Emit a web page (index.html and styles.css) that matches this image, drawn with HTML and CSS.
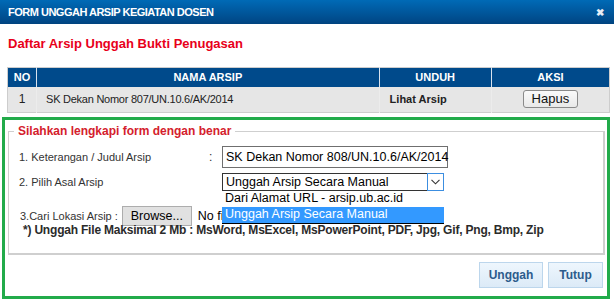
FILE: index.html
```html
<!DOCTYPE html>
<html>
<head>
<meta charset="utf-8">
<link rel="stylesheet" href="styles.css">
</head>
<body>
<div class="dialog">
  <div class="titlebar">
    <span class="title">FORM UNGGAH ARSIP KEGIATAN DOSEN</span>
    <span class="close">✖</span>
  </div>
  <h2 class="heading">Daftar Arsip Unggah Bukti Penugasan</h2>
  <table class="arsip">
    <colgroup><col class="w-no"><col class="w-nama"><col class="w-unduh"><col class="w-aksi"></colgroup>
    <thead>
      <tr><th>NO</th><th>NAMA ARSIP</th><th>UNDUH</th><th>AKSI</th></tr>
    </thead>
    <tbody>
      <tr>
        <td class="c-no">1</td>
        <td class="c-nama">SK Dekan Nomor 807/UN.10.6/AK/2014</td>
        <td class="c-unduh">Lihat Arsip</td>
        <td class="c-aksi"><span class="btn-hapus">Hapus</span></td>
      </tr>
    </tbody>
  </table>
  <div class="panel">
    <fieldset class="form">
      <legend>Silahkan lengkapi form dengan benar</legend>
      <div class="row r1">
        <span class="lbl">1. Keterangan / Judul Arsip</span>
        <span class="colon">:</span>
        <div class="input">SK Dekan Nomor 808/UN.10.6/AK/2014</div>
      </div>
      <div class="row r2">
        <span class="lbl">2. Pilih Asal Arsip</span>
        <span class="colon"></span>
        <div class="select-wrap">
          <div class="select">
            <span class="sel-text">Unggah Arsip Secara Manual</span>
            <span class="arrow"><svg width="9" height="6" viewBox="0 0 9 6"><path d="M0.5 0.8 L4.5 4.8 L8.5 0.8" fill="none" stroke="#333" stroke-width="1.1"/></svg></span>
          </div>
          <div class="options">
            <div class="opt">Dari Alamat URL - arsip.ub.ac.id</div>
            <div class="opt sel">Unggah Arsip Secara Manual</div>
          </div>
        </div>
      </div>
      <div class="row r3">
        <span class="lbl3">3.Cari Lokasi Arsip :</span>
        <span class="browse">Browse...</span>
        <span class="nofile">No file selected.</span>
      </div>
      <div class="note">*) Unggah File Maksimal 2 Mb : MsWord, MsExcel, MsPowerPoint, PDF, Jpg, Gif, Png, Bmp, Zip</div>
    </fieldset>
    <div class="actions">
      <span class="btn">Unggah</span>
      <span class="btn">Tutup</span>
    </div>
  </div>
</div>
</body>
</html>
```

FILE: styles.css
```css
* { box-sizing: border-box; }
html, body { margin: 0; padding: 0; background: #fff; }
body { font-family: "Liberation Sans", Arial, sans-serif; width: 614px; height: 303px; overflow: hidden; }

.dialog { width: 614px; }

.titlebar {
  height: 24px;
  background: linear-gradient(#006ab6, #004a8a 85%, #00437e);
  display: flex;
  align-items: center;
  justify-content: space-between;
  padding: 0 10px 0 8px;
}
.title { color: #fff; font-weight: bold; font-size: 11px; letter-spacing: -0.5px; }
.close { color: #e8eef6; font-size: 10px; font-weight: bold; }

.heading {
  margin: 12px 0 0 8px;
  height: 20px;
  font-size: 13px;
  font-weight: bold;
  color: #e8001a;
  line-height: 16px;
}

.arsip {
  margin: 11px 0 0 7px;
  width: 603px;
  border-collapse: collapse;
  table-layout: fixed;
  border: 1px solid #cdcdcd;
  font-size: 11px;
}
.w-no { width: 29px; }
.w-nama { width: 342px; }
.w-unduh { width: 112px; }
.w-aksi { width: 118px; }
.arsip th {
  background: #004a8b;
  color: #fff;
  font-size: 11px;
  font-weight: bold;
  height: 19px;
  padding: 0;
  border-left: 1px solid #d8e2ee;
  text-align: center;
}
.arsip th:first-child { border-left: none; }
.arsip td {
  background: #e6e6e6;
  height: 26px;
  padding: 0;
  color: #222;
  border-left: 1px solid #ececec;
  vertical-align: middle;
}
.arsip td:first-child { border-left: none; }
.c-no { text-align: center; font-size: 12px; }
.c-nama { padding-left: 9px !important; letter-spacing: -0.25px; }
.c-unduh { padding-left: 10px !important; font-weight: bold; }
.c-aksi { text-align: center; }
.btn-hapus {
  display: inline-block;
  width: 55px;
  height: 18px;
  line-height: 16px;
  font-size: 13px;
  color: #111;
  border: 1px solid #8a8a8a;
  border-radius: 3px;
  background: linear-gradient(#fafafa, #e9e9e9);
  text-align: center;
}

.panel {
  margin: 4px 4px 0 2px;
  height: 182px;
  border: 3px solid #22ab4a;
  display: flex;
  flex-direction: column;
}

.form {
  margin: 4px 2px 0 3px;
  padding: 0 0 0 10px;
  border: 1px solid #cfcfcf;
  border-width: 1px 2px 2px 1px;
  height: 131px;
  min-width: 0;
  font-size: 11px;
  color: #333;
}
.form legend {
  margin-left: -5px;
  padding: 0 4px;
  color: #d4202c;
  font-weight: bold;
  font-size: 12px;
  line-height: 14px;
}

.row { display: flex; align-items: center; }
.r1 { margin-top: 8px; height: 22px; }
.r2 { margin-top: 5px; height: 18px; }
.r3 { margin-top: 15px; height: 20px; }
.lbl { width: 190px; font-size: 11px; }
.colon { width: 13px; font-size: 12px; }

.input {
  width: 226px;
  height: 22px;
  border: 1px solid #6f6f6f;
  font-size: 12.5px;
  color: #000;
  line-height: 20px;
  padding-left: 3px;
  white-space: nowrap;
}

.select-wrap { position: relative; width: 222px; height: 18px; }
.select {
  height: 18px;
  border: 1px solid #333;
  border-right: none;
  display: flex;
  font-size: 12.5px;
  color: #000;
  line-height: 16px;
}
.sel-text { flex: 1; padding-left: 3px; white-space: nowrap; }
.arrow {
  width: 17px;
  border: 1px solid #3c8ee0;
  margin-top: -1px;
  height: 18px;
  display: flex;
  align-items: center;
  justify-content: center;
}
.options {
  position: absolute;
  left: 0;
  top: 18px;
  width: 222px;
  background: #fff;
  border-bottom: 1px solid #000;
  font-size: 12.5px;
  color: #000;
  z-index: 5;
}
.opt { height: 16px; line-height: 15px; padding-left: 3px; white-space: nowrap; }
.opt.sel { background: #3399ff; color: #fff; }

.lbl3 { font-size: 11px; padding-left: 1px; margin-right: 4px; }
.browse {
  width: 70px;
  height: 20px;
  border: 1px solid #adadad;
  background: #e1e1e1;
  font-size: 12.5px;
  color: #000;
  text-align: center;
  line-height: 18px;
}
.nofile { margin-left: 6px; font-size: 12.5px; color: #000; white-space: nowrap; }

.note {
  margin-top: -3px;
  padding-left: 4px;
  font-size: 12px;
  font-weight: bold;
  color: #2b2b2b;
  letter-spacing: -0.2px;
  white-space: nowrap;
}

.actions {
  margin-top: 7px;
  display: flex;
  justify-content: flex-end;
  gap: 5px;
  padding-right: 4px;
}
.btn {
  height: 26px;
  line-height: 24px;
  border: 1px solid #bcd6ec;
  background: linear-gradient(#eef6fd, #dceaf7);
  color: #2d5c8c;
  font-weight: bold;
  font-size: 12px;
  text-align: center;
}
.btn:first-child { width: 64px; }
.btn:last-child { width: 55px; }
```
